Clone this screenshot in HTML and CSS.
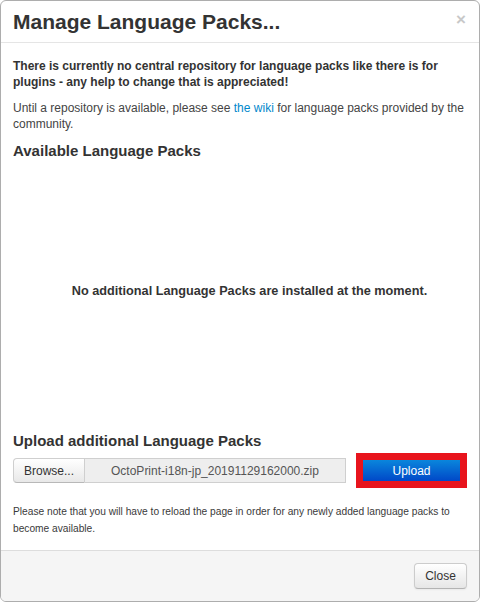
FILE: index.html
```html
<!DOCTYPE html>
<html>
<head>
<meta charset="utf-8">
<link rel="stylesheet" href="styles.css">
</head>
<body>
<div class="modal">
  <div class="modal-header">
    <h3 class="modal-title">Manage Language Packs...</h3>
    <span class="close">&times;</span>
  </div>
  <div class="modal-body">
    <p class="strong">There is currently no central repository for language packs like there is for plugins - any help to change that is appreciated!</p>
    <p class="intro">Until a repository is available, please see <a href="#" class="link">the wiki</a> for language packs provided by the community.</p>
    <h4 class="section-title">Available Language Packs</h4>
    <div class="pack-list">
      <div class="empty">No additional Language Packs are installed at the moment.</div>
    </div>
    <h4 class="section-title upload-title">Upload additional Language Packs</h4>
    <div class="upload-row">
      <div class="file-input">
        <span class="browse">Browse...</span>
        <span class="filename">OctoPrint-i18n-jp_20191129162000.zip</span>
      </div>
      <div class="highlight">
        <span class="btn-primary">Upload</span>
      </div>
    </div>
    <p class="note">Please note that you will have to reload the page in order for any newly added language packs to become available.</p>
  </div>
  <div class="modal-footer">
    <span class="btn">Close</span>
  </div>
</div>
</body>
</html>
```

FILE: styles.css
```css
html, body {
  margin: 0;
  padding: 0;
  background: #fff;
}
body {
  font-family: "Liberation Sans", Arial, sans-serif;
  color: #333;
  font-size: 12px;
  line-height: 16px;
}
.modal {
  box-sizing: border-box;
  width: 480px;
  height: 602px;
  border: 1px solid #adadad;
  border-radius: 6px;
  display: flex;
  flex-direction: column;
  overflow: hidden;
  background: #fff;
}
.modal-header {
  box-sizing: border-box;
  height: 42px;
  padding: 0 12px;
  border-bottom: 1px solid #e5e5e5;
  display: flex;
  align-items: flex-start;
  justify-content: space-between;
}
.modal-title {
  margin: 0;
  font-size: 21px;
  line-height: 41px;
  font-weight: bold;
  color: #333;
}
.close {
  font-size: 17px;
  font-weight: bold;
  line-height: 17px;
  color: #c8c8c8;
  margin-top: 10px;
  margin-right: 1px;
}
.modal-body {
  box-sizing: border-box;
  height: 507px;
  padding: 15px 12px 0;
}
p {
  margin: 0 0 10px;
}
.strong {
  font-weight: bold;
}
.intro {
  color: #444;
}
.link {
  color: #0088cc;
  text-decoration: none;
}
.section-title {
  margin: 10px 0 9px;
  font-size: 15px;
  line-height: 17px;
  font-weight: bold;
}
.pack-list {
  height: 254px;
  box-sizing: border-box;
  padding-top: 115px;
}
.empty {
  font-weight: bold;
  font-size: 12.7px;
  text-align: center;
  padding-left: 19px;
}
.upload-title {
  margin: 10px 0 4px;
}
.upload-row {
  display: flex;
  align-items: center;
  gap: 10px;
  height: 35px;
}
.file-input {
  display: flex;
  height: 25px;
  box-sizing: border-box;
}
.browse {
  box-sizing: border-box;
  width: 72px;
  height: 25px;
  border: 1px solid #cfcfcf;
  border-bottom-color: #b8b8b8;
  border-radius: 4px 0 0 4px;
  background: linear-gradient(#ffffff, #e8e8e8);
  display: flex;
  align-items: center;
  justify-content: center;
  color: #333;
}
.filename {
  box-sizing: border-box;
  width: 261px;
  height: 25px;
  border: 1px solid #cfcfcf;
  border-left: none;
  background: #eeeeee;
  display: flex;
  align-items: center;
  justify-content: center;
  color: #555;
}
.highlight {
  box-sizing: border-box;
  width: 112px;
  height: 35px;
  border: 7px solid #e8141d;
  display: flex;
}
.btn-primary {
  flex: 1;
  display: flex;
  align-items: center;
  justify-content: center;
  color: #fff;
  background: linear-gradient(#0a86dc, #0048c8);
}
.note {
  margin: 15px 0 0;
  font-size: 10.2px;
  line-height: 17px;
  color: #3a3a3a;
}
.modal-footer {
  box-sizing: border-box;
  height: 51px;
  border-top: 1px solid #dddddd;
  background: #f5f5f5;
  padding: 12px 12px 0;
  display: flex;
  justify-content: flex-end;
  align-items: flex-start;
}
.btn {
  box-sizing: border-box;
  width: 53px;
  height: 26px;
  border: 1px solid #cccccc;
  border-bottom-color: #b3b3b3;
  border-radius: 4px;
  background: linear-gradient(#ffffff, #e6e6e6);
  display: flex;
  align-items: center;
  justify-content: center;
  color: #333;
  box-shadow: 0 1px 2px rgba(0,0,0,0.05);
}
```
